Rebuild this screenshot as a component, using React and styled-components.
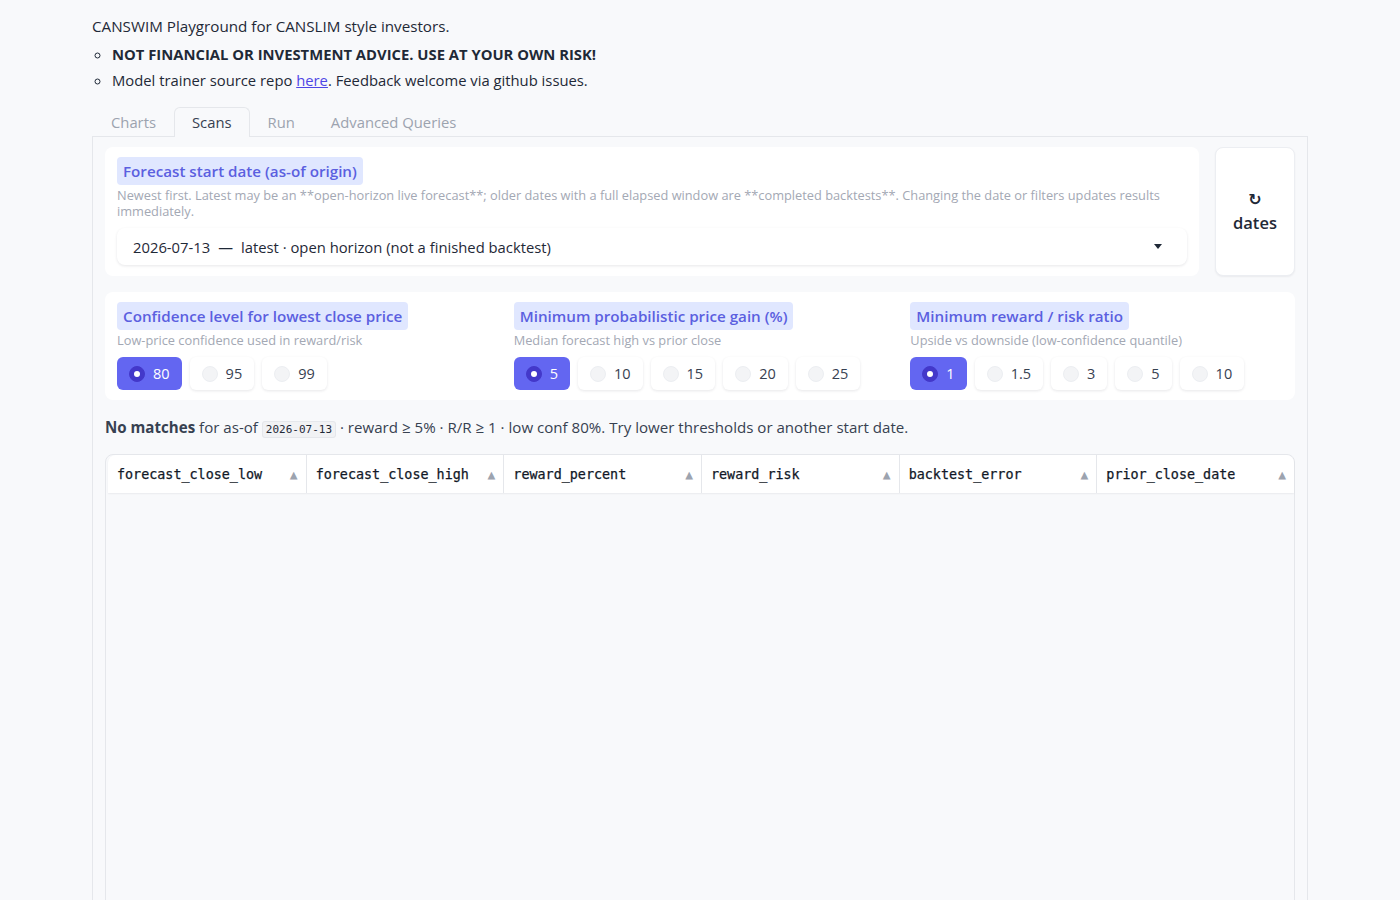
import React, { useState } from "react";
import styled, { createGlobalStyle } from "styled-components";

const GlobalStyle = createGlobalStyle`
  html, body {
    margin: 0;
    padding: 0;
    background: #f8f9fb;
    font-family: "Open Sans", "DejaVu Sans", sans-serif;
    color: #1f2937;
  }
`;

const Page = styled.div`
  width: 1216px;
  margin: 0 auto;
  padding-top: 15px;
`;

const Intro = styled.p`
  margin: 0 0 4px;
  font-size: 15.2px;
  line-height: 22px;
`;

const Notes = styled.ul`
  list-style: circle;
  margin: 0;
  padding-left: 20px;
  font-size: 14.8px;
  line-height: 26px;
`;

const Strong = styled.strong`
  font-weight: 700;
`;

const Link = styled.a`
  color: #4f46e5;
  text-decoration: underline;
`;

const TabBar = styled.div`
  display: flex;
  margin-top: 14px;
  padding-left: 1px;
  border-bottom: 1px solid #e5e7eb;
`;

const Tab = styled.div`
  padding: 0 17px;
  height: 28px;
  line-height: 28px;
  font-size: 14.8px;
  color: ${(p) => (p.$active ? "#374151" : "#9ca3af")};
  background: ${(p) => (p.$active ? "#f8f9fb" : "transparent")};
  border: 1px solid ${(p) => (p.$active ? "#e5e7eb" : "transparent")};
  border-bottom: none;
  border-radius: 6px 6px 0 0;
  margin-bottom: -1px;
  padding-bottom: 1px;
`;

const Panel = styled.div`
  border: 1px solid #e5e7eb;
  border-top: none;
  padding: 10px 12px 0;
  min-height: 800px;
`;

const TopRow = styled.div`
  display: flex;
  gap: 16px;
`;

const Card = styled.div`
  background: #ffffff;
  border-radius: 8px;
  padding: 10px 12px 11px;
  flex: 1;
`;

const Chip = styled.span`
  display: inline-block;
  background: #e0e7ff;
  color: #5b5fe0;
  font-size: 15.2px;
  font-weight: 600;
  line-height: 28px;
  padding: 0 6px;
  border-radius: 4px;
`;

const Hint = styled.div`
  font-size: 12.8px;
  line-height: 16px;
  color: #a3a8b4;
  margin-top: 2px;
`;

const Select = styled.div`
  display: flex;
  align-items: center;
  justify-content: space-between;
  height: 37px;
  margin-top: 9px;
  padding: 0 25px 0 16px;
  background: #fff;
  border-radius: 8px;
  box-shadow: 0 1px 3px rgba(15, 23, 42, 0.1);
  font-size: 14.8px;
  color: #1f2937;
`;

const Dash = styled.span`
  margin: 0 8px;
`;

const Caret = styled.span`
  width: 0;
  height: 0;
  border-left: 4.5px solid transparent;
  border-right: 4.5px solid transparent;
  border-top: 5px solid #1f2937;
`;

const DatesButton = styled.button`
  width: 80px;
  flex: none;
  display: flex;
  flex-direction: column;
  align-items: center;
  justify-content: center;
  gap: 2px;
  background: #fff;
  border: 1px solid #eceef2;
  border-radius: 8px;
  box-shadow: 0 1px 2px rgba(15, 23, 42, 0.06);
  font-family: inherit;
  font-size: 16.5px;
  font-weight: 600;
  color: #1f2937;
  cursor: pointer;
`;

const Refresh = styled.span`
  font-size: 16px;
  font-weight: 700;
  line-height: 20px;
`;

const Filters = styled.div`
  display: grid;
  grid-template-columns: repeat(3, 1fr);
  gap: 24px;
  background: #fff;
  border-radius: 8px;
  padding: 10px 12px;
  margin-top: 16px;
`;

const Group = styled.div``;

const Options = styled.div`
  display: flex;
  gap: 8px;
  margin-top: 9px;
`;

const Pill = styled.label`
  display: flex;
  align-items: center;
  gap: 8px;
  height: 33px;
  padding: 0 12px;
  border-radius: 6px;
  font-size: 14.5px;
  cursor: pointer;
  background: ${(p) => (p.$on ? "#6366f1" : "#fff")};
  color: ${(p) => (p.$on ? "#fff" : "#374151")};
  box-shadow: ${(p) => (p.$on ? "none" : "0 1px 3px rgba(15, 23, 42, 0.1)")};
`;

const Dot = styled.span`
  width: 16px;
  height: 16px;
  border-radius: 50%;
  box-sizing: border-box;
  display: flex;
  align-items: center;
  justify-content: center;
  background: ${(p) => (p.$on ? "#4338ca" : "#f3f4f6")};
  border: 1px solid ${(p) => (p.$on ? "#4338ca" : "#eceef2")};
  &::after {
    content: "";
    width: 6px;
    height: 6px;
    border-radius: 50%;
    background: #fff;
    display: ${(p) => (p.$on ? "block" : "none")};
  }
`;

const Status = styled.p`
  margin: 17px 0 0;
  font-size: 15.1px;
  line-height: 20px;
  color: #374151;
`;

const Code = styled.code`
  font-family: "DejaVu Sans Mono", "Liberation Mono", monospace;
  font-size: 11px;
  background: #f1f2f4;
  border: 1px solid #e5e7eb;
  border-radius: 3px;
  padding: 1px 3px;
  color: #1f2937;
`;

const Table = styled.div`
  margin-top: 14px;
  border: 1px solid #e5e7eb;
  border-radius: 8px 8px 0 0;
  min-height: 460px;
`;

const HeadRow = styled.div`
  display: grid;
  grid-template-columns: repeat(6, 1fr);
  background: #fff;
  border-radius: 8px 8px 0 0;
  margin-left: 2px;
  box-shadow: 0 1px 2px rgba(15, 23, 42, 0.06);
`;

const HeadCell = styled.div`
  display: flex;
  align-items: center;
  justify-content: space-between;
  height: 38px;
  padding: 0 8px 0 9px;
  border-left: ${(p) => (p.$first ? "none" : "1px solid #e5e7eb")};
  font-family: "DejaVu Sans Mono", "Liberation Mono", monospace;
  font-size: 13.4px;
  color: #111827;
  -webkit-text-stroke: 0.25px #111827;
`;

const SortMark = styled.span`
  font-size: 13px;
  color: #9ca3af;
  -webkit-text-stroke: 0;
`;

const confidence = ["80", "95", "99"];
const gains = ["5", "10", "15", "20", "25"];
const ratios = ["1", "1.5", "3", "5", "10"];
const columns = [
  "forecast_close_low",
  "forecast_close_high",
  "reward_percent",
  "reward_risk",
  "backtest_error",
  "prior_close_date",
];

function Choice({ values, value, onChange }) {
  return (
    <Options>
      {values.map((v) => (
        <Pill key={v} $on={v === value} onClick={() => onChange(v)}>
          <Dot $on={v === value} />
          {v}
        </Pill>
      ))}
    </Options>
  );
}

export default function App() {
  const [conf, setConf] = useState("80");
  const [gain, setGain] = useState("5");
  const [ratio, setRatio] = useState("1");

  return (
    <>
      <GlobalStyle />
      <Page>
        <Intro>CANSWIM Playground for CANSLIM style investors.</Intro>
        <Notes>
          <li>
            <Strong>NOT FINANCIAL OR INVESTMENT ADVICE. USE AT YOUR OWN RISK!</Strong>
          </li>
          <li>
            Model trainer source repo <Link href="#">here</Link>. Feedback welcome via github issues.
          </li>
        </Notes>

        <TabBar>
          <Tab>Charts</Tab>
          <Tab $active>Scans</Tab>
          <Tab>Run</Tab>
          <Tab>Advanced Queries</Tab>
        </TabBar>

        <Panel>
          <TopRow>
            <Card>
              <Chip>Forecast start date (as-of origin)</Chip>
              <Hint>
                Newest first. Latest may be an **open-horizon live forecast**; older dates with a full elapsed window
                are **completed backtests**. Changing the date or filters updates results immediately.
              </Hint>
              <Select>
                <span>
                  2026-07-13<Dash>—</Dash>latest · open horizon (not a finished backtest)
                </span>
                <Caret />
              </Select>
            </Card>
            <DatesButton>
              <Refresh>↻</Refresh>
              dates
            </DatesButton>
          </TopRow>

          <Filters>
            <Group>
              <Chip>Confidence level for lowest close price</Chip>
              <Hint>Low-price confidence used in reward/risk</Hint>
              <Choice values={confidence} value={conf} onChange={setConf} />
            </Group>
            <Group>
              <Chip>Minimum probabilistic price gain (%)</Chip>
              <Hint>Median forecast high vs prior close</Hint>
              <Choice values={gains} value={gain} onChange={setGain} />
            </Group>
            <Group>
              <Chip>Minimum reward / risk ratio</Chip>
              <Hint>Upside vs downside (low-confidence quantile)</Hint>
              <Choice values={ratios} value={ratio} onChange={setRatio} />
            </Group>
          </Filters>

          <Status>
            <Strong>No matches</Strong> for as-of <Code>2026-07-13</Code> · reward ≥ {gain}% · R/R ≥ {ratio} · low
            conf {conf}%. Try lower thresholds or another start date.
          </Status>

          <Table>
            <HeadRow>
              {columns.map((c, i) => (
                <HeadCell key={c} $first={i === 0}>
                  {c}
                  <SortMark>▲</SortMark>
                </HeadCell>
              ))}
            </HeadRow>
          </Table>
        </Panel>
      </Page>
    </>
  );
}
